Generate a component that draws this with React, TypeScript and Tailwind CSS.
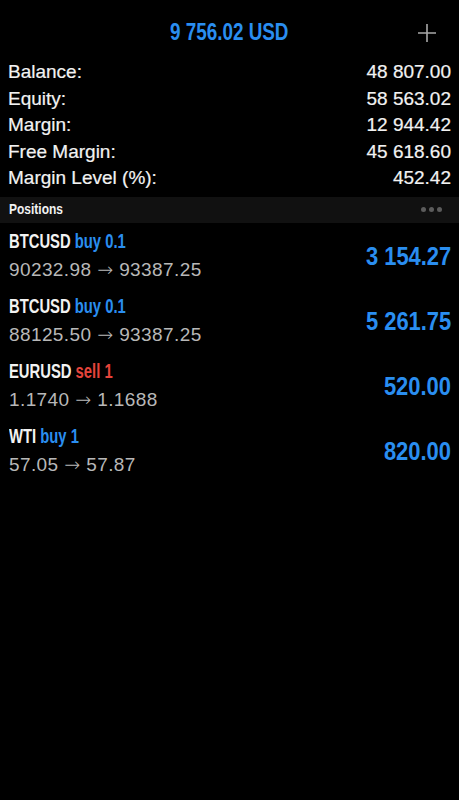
import React from "react";

const summary = [
  { label: "Balance:", value: "48 807.00" },
  { label: "Equity:", value: "58 563.02" },
  { label: "Margin:", value: "12 944.42" },
  { label: "Free Margin:", value: "45 618.60" },
  { label: "Margin Level (%):", value: "452.42" },
];

const positions = [
  { symbol: "BTCUSD", side: "buy", volume: "0.1", open: "90232.98", current: "93387.25", profit: "3 154.27" },
  { symbol: "BTCUSD", side: "buy", volume: "0.1", open: "88125.50", current: "93387.25", profit: "5 261.75" },
  { symbol: "EURUSD", side: "sell", volume: "1", open: "1.1740", current: "1.1688", profit: "520.00" },
  { symbol: "WTI", side: "buy", volume: "1", open: "57.05", current: "57.87", profit: "820.00" },
];

export default function App() {
  return (
    <div className="w-[459px] h-[800px] bg-black text-white overflow-hidden font-['Liberation_Sans',Arial,sans-serif]">
      {/* Header */}
      <div className="relative h-[59px] flex items-center justify-center">
        <div className="inline-block scale-x-[0.82] font-bold text-[23px] text-[#2a8ef0] pt-[6px] whitespace-nowrap">
          9 756.02 USD
        </div>
        <svg className="absolute right-[22px] top-[23px]" width="20" height="20" viewBox="0 0 20 20">
          <path d="M10 1v18M1 10h18" stroke="#a8a8a8" strokeWidth="1.6" />
        </svg>
      </div>

      {/* Account summary */}
      <div className="px-[8px] text-[19px] text-[#f2f2f2] [-webkit-text-stroke:0.2px_#f2f2f2]">
        {summary.map((row) => (
          <div key={row.label} className="h-[26.5px] flex items-center justify-between">
            <span>{row.label}</span>
            <span>{row.value}</span>
          </div>
        ))}
      </div>

      {/* Positions bar */}
      <div className="mt-[5px] h-[26px] bg-[#111111] flex items-center justify-between pl-[9px] pr-[17px]">
        <span className="inline-block origin-left scale-x-[0.8] font-bold text-[15px] text-[#f2f2f2]">Positions</span>
        <div className="flex gap-[3px]">
          <span className="w-[5px] h-[5px] rounded-full bg-[#5c5c5c]" />
          <span className="w-[5px] h-[5px] rounded-full bg-[#5c5c5c]" />
          <span className="w-[5px] h-[5px] rounded-full bg-[#5c5c5c]" />
        </div>
      </div>

      {/* Positions */}
      <div className="pt-[1px]">
        {positions.map((p, i) => (
          <div key={i} className="h-[65px] flex items-center justify-between pl-[9px] pr-[8px]">
            <div className="flex flex-col">
              <div className="inline-block origin-left scale-x-[0.74] whitespace-nowrap font-bold text-[20px] h-[21px] leading-[21px] mt-[-1px]">
                <span className="text-[#f2f2f2]">{p.symbol} </span>
                <span className={p.side === "sell" ? "text-[#e5443b]" : "text-[#2a8ef0]"}>
                  {p.side} {p.volume}
                </span>
              </div>
              <div className="mt-[6.5px] h-[22px] leading-[22px] text-[19px] tracking-[0.4px] text-[#b8b8b8] whitespace-nowrap">
                {p.open} <span className="font-['Noto_Sans','DejaVu_Sans',sans-serif] font-light text-[19px]">→</span> {p.current}
              </div>
            </div>
            <div className="inline-block origin-right scale-x-[0.86] whitespace-nowrap font-bold text-[25.5px] text-[#2a8ef0]">
              {p.profit}
            </div>
          </div>
        ))}
      </div>
    </div>
  );
}
